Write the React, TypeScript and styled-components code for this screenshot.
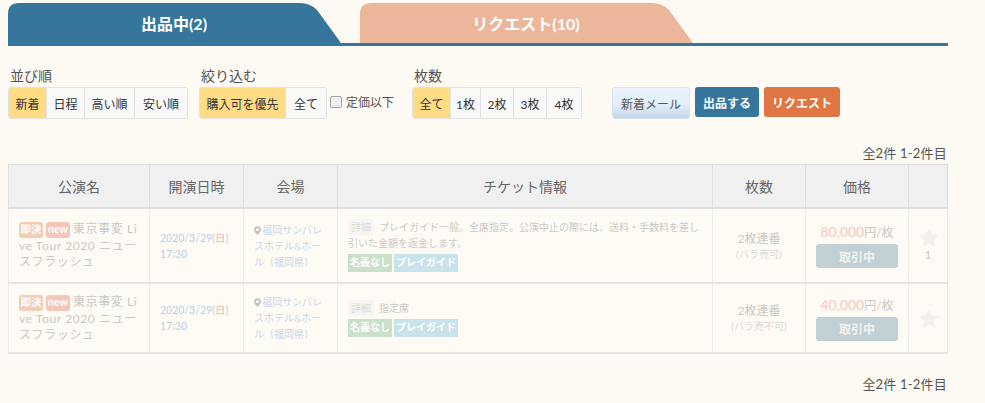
import { createGlobalStyle, styled } from "styled-components";

const GlobalStyle = createGlobalStyle`
  html, body {
    margin: 0;
    padding: 0;
    background: #fdfaf3;
    color: #444;
    font-family: "Lato", "Noto Sans CJK JP", sans-serif;
    font-size: 12px;
  }
`;

const Page = styled.div`
  width: 940px;
  padding: 3px 0 0 8px;
`;

const TabBar = styled.div`
  display: flex;
  gap: 20px;
  height: 40px;
  border-bottom: 3px solid #36769c;
`;

const Tab = styled.div<{ $active?: boolean }>`
  width: 332px;
  height: 40px;
  display: flex;
  align-items: center;
  justify-content: center;
  box-sizing: border-box;
  color: #fff;
  font-size: 16px;
  font-weight: 700;
  background: ${(p) => (p.$active ? "#36769c" : "#ecb69b")};
  clip-path: path("M0 40 V11 Q0 0 11 0 H292 Q302 0 309 7 L333 40 Z");
`;

const Filters = styled.div`
  display: flex;
  align-items: flex-end;
  margin-top: 21px;
  height: 52px;
`;

const FilterBlock = styled.div<{ $width: number }>`
  width: ${(p) => p.$width}px;
  flex: none;
`;

const FilterLabel = styled.div`
  height: 20px;
  padding-left: 2px;
  font-size: 14px;
  line-height: 18px;
  color: #555;
`;

const GroupRow = styled.div`
  display: flex;
  align-items: center;
`;

const Group = styled.div`
  display: inline-flex;
  height: 32px;
  box-sizing: border-box;
  border: 1px solid #e2e2e2;
  border-radius: 3px;
  overflow: hidden;
  vertical-align: top;
`;

const Seg = styled.div<{ $width: number; $on?: boolean }>`
  width: ${(p) => p.$width}px;
  box-sizing: border-box;
  display: flex;
  align-items: center;
  justify-content: center;
  font-size: 12px;
  color: #333;
  background: ${(p) => (p.$on ? "#ffdb84" : "#f9f9f9")};
  & + & {
    border-left: 1px solid #e2e2e2;
  }
`;

const CheckLabel = styled.label`
  display: flex;
  align-items: center;
  gap: 4px;
  margin-left: 3px;
  margin-top: -3px;
  font-size: 12px;
  color: #555;
`;

const CheckBox = styled.span`
  width: 12px;
  height: 12px;
  box-sizing: border-box;
  border: 1px solid #a5a5a5;
  border-radius: 2px;
  background: #f0f0f0;
`;

const Actions = styled.div`
  display: flex;
  align-items: flex-start;
  gap: 5px;
  height: 32px;
`;

const MailButton = styled.div`
  width: 78px;
  height: 32px;
  box-sizing: border-box;
  display: flex;
  align-items: center;
  justify-content: center;
  border: 1px solid #d8e4ee;
  border-radius: 3px;
  font-size: 12px;
  color: #555;
  background: linear-gradient(#e8f4fe 0%, #e4f1fc 50%, #c4d7e8 100%);
`;

const ActionButton = styled.div<{ $color: string; $width: number }>`
  width: ${(p) => p.$width}px;
  height: 30px;
  display: flex;
  align-items: center;
  justify-content: center;
  border-radius: 3px;
  font-size: 12px;
  font-weight: 700;
  color: #fff;
  background: ${(p) => p.$color};
`;

const Count = styled.div<{ $top: number }>`
  margin-top: ${(p) => p.$top}px;
  height: 18px;
  line-height: 18px;
  text-align: right;
  padding-right: 1px;
  font-size: 13px;
  letter-spacing: 0.2px;
  color: #555;
`;

const Table = styled.table`
  width: 939px;
  margin-top: 2px;
  border-collapse: collapse;
  table-layout: fixed;
`;

const Th = styled.th<{ $width: number }>`
  width: ${(p) => p.$width}px;
  box-sizing: border-box;
  height: 43px;
  padding: 0;
  background: #f0f0f0;
  border: 1px solid #dedede;
  border-bottom-width: 2px;
  font-size: 14px;
  font-weight: 400;
  color: #666;
`;

const Row = styled.tr<{ $height: number }>`
  height: ${(p) => p.$height}px;
  border-bottom: 2px solid #e6e5e1;
`;

const Td = styled.td<{ $center?: boolean }>`
  padding: 1px 10px 0;
  border-left: 1px solid #eeedea;
  border-right: 1px solid #eeedea;
  background: #fefbf5;
  vertical-align: middle;
  text-align: ${(p) => (p.$center ? "center" : "left")};
`;

const Title = styled.div`
  font-size: 12px;
  line-height: 16px;
  letter-spacing: 0.6px;
  color: #c9c8c3;
  word-break: break-all;
`;

const Badge = styled.span<{ $color: string }>`
  display: inline-block;
  height: 16px;
  width: 24px;
  text-align: center;
  line-height: 14px;
  margin-right: 3px;
  border-radius: 3px;
  font-size: 10.5px;
  font-weight: 700;
  letter-spacing: 0;
  color: #fff;
  background: ${(p) => p.$color};
`;

const DateText = styled.div`
  font-size: 10.5px;
  line-height: 16px;
  color: #bccde9;
`;

const Sunday = styled.span`
  color: #f4b3ae;
`;

const Venue = styled.div`
  font-size: 10px;
  line-height: 16px;
  color: #c9d6ec;
  svg {
    vertical-align: -1px;
    margin-right: 1px;
  }
`;

const Info = styled.div`
  font-size: 10px;
  line-height: 16px;
  color: #cbcac5;
`;

const Detail = styled.span`
  display: inline-block;
  height: 16px;
  padding: 0 3px;
  margin-right: 5px;
  background: #f6f5f1;
  border-radius: 2px;
  color: #dedcd6;
`;

const Tags = styled.div`
  display: flex;
  gap: 2px;
  margin-top: 3px;
`;

const Tag = styled.span<{ $color: string }>`
  height: 18px;
  line-height: 17px;
  padding: 0 2px;
  font-size: 10px;
  font-weight: 700;
  color: #fff;
  background: ${(p) => p.$color};
`;

const Seats = styled.div`
  font-size: 12px;
  line-height: 16px;
  color: #c9c8c3;
`;

const Split = styled.div`
  font-size: 10px;
  line-height: 14px;
  color: #dbdad5;
`;

const PriceCell = styled.div`
  font-size: 12px;
  line-height: 18px;
  color: #cbcac5;
  strong {
    font-size: 14px;
    font-weight: 400;
    color: #f5c9bd;
  }
`;

const Status = styled.div`
  height: 24px;
  margin: 2px auto 0;
  width: 82px;
  display: flex;
  align-items: center;
  justify-content: center;
  border-radius: 3px;
  font-size: 12px;
  font-weight: 700;
  color: #f3f3ee;
  background: #c0d0d4;
`;

const Fav = styled.div`
  color: #cbcac5;
  font-size: 12px;
  line-height: 16px;
  svg {
    display: block;
    margin: 0 auto;
  }
`;

const sorts = [
  { label: "新着", w: 37, on: true },
  { label: "日程", w: 38 },
  { label: "高い順", w: 50 },
  { label: "安い順", w: 53 },
];
const narrow = [
  { label: "購入可を優先", w: 85, on: true },
  { label: "全て", w: 41 },
];
const counts = [
  { label: "全て", w: 37, on: true },
  { label: "1枚", w: 30 },
  { label: "2枚", w: 33 },
  { label: "3枚", w: 33 },
  { label: "4枚", w: 35 },
];

const columns = [
  { label: "公演名", w: 141 },
  { label: "開演日時", w: 94 },
  { label: "会場", w: 94 },
  { label: "チケット情報", w: 375 },
  { label: "枚数", w: 93 },
  { label: "価格", w: 103 },
  { label: "", w: 39 },
];

const listings = [
  {
    height: 75,
    note: "プレイガイド一般。全席指定。公演中止の際には、送料・手数料を差し引いた金額を返金します。",
    split: "(バラ売可)",
    price: "80,000",
    favs: "1",
  },
  {
    height: 70,
    note: "指定席",
    split: "(バラ売不可)",
    price: "40,000",
    favs: "",
  },
];

function Pin() {
  return (
    <svg width="7" height="9" viewBox="0 0 8 10">
      <path
        fill="#c4c4bf"
        fillRule="evenodd"
        d="M4 0a4 4 0 0 1 4 4c0 2.2-2.6 4.8-4 6C2.6 8.800 0 6.200 0 4a4 4 0 0 1 4-4zm0 2.300a1.700 1.700 0 1 0 0 3.400 1.700 1.700 0 0 0 0-3.400z"
      />
    </svg>
  );
}

function Star() {
  return (
    <svg width="20" height="19" viewBox="0 0 20 19">
      <path
        fill="#f2f1ec"
        d="M10 0l3 6.300 7 .9-5.100 4.800 1.300 6.900L10 15.500l-6.200 3.400 1.300-6.900L0 7.200l7-.9z"
      />
    </svg>
  );
}

function Segments({ items }: { items: { label: string; w: number; on?: boolean }[] }) {
  return (
    <Group>
      {items.map((item) => (
        <Seg key={item.label} $width={item.w} $on={item.on}>
          {item.label}
        </Seg>
      ))}
    </Group>
  );
}

export default function App() {
  return (
    <Page>
      <GlobalStyle />
      <TabBar>
        <Tab $active>出品中(2)</Tab>
        <Tab>リクエスト(10)</Tab>
      </TabBar>

      <Filters>
        <FilterBlock $width={191}>
          <FilterLabel>並び順</FilterLabel>
          <Segments items={sorts} />
        </FilterBlock>
        <FilterBlock $width={213}>
          <FilterLabel>絞り込む</FilterLabel>
          <GroupRow>
            <Segments items={narrow} />
            <CheckLabel>
              <CheckBox />
              定価以下
            </CheckLabel>
          </GroupRow>
        </FilterBlock>
        <FilterBlock $width={200}>
          <FilterLabel>枚数</FilterLabel>
          <Segments items={counts} />
        </FilterBlock>
        <Actions>
          <MailButton>新着メール</MailButton>
          <ActionButton $color="#36769c" $width={64}>
            出品する
          </ActionButton>
          <ActionButton $color="#e07643" $width={76}>
            リクエスト
          </ActionButton>
        </Actions>
      </Filters>

      <Count $top={25}>全2件 1-2件目</Count>

      <Table>
        <thead>
          <tr>
            {columns.map((col) => (
              <Th key={col.label} $width={col.w}>
                {col.label}
              </Th>
            ))}
          </tr>
        </thead>
        <tbody>
          {listings.map((item) => (
            <Row key={item.price} $height={item.height}>
              <Td>
                <Title>
                  <Badge $color="#f2cdb8">即決</Badge>
                  <Badge $color="#f3c8bb">new</Badge>
                  東京事変 Live Tour 2020 ニュースフラッシュ
                </Title>
              </Td>
              <Td>
                <DateText>
                  2020/3/29(<Sunday>日</Sunday>)
                  <br />
                  17:30
                </DateText>
              </Td>
              <Td>
                <Venue>
                  <Pin />
                  福岡サンパレスホテル&ホール（福岡県）
                </Venue>
              </Td>
              <Td>
                <Info>
                  <Detail>詳細</Detail>
                  {item.note}
                </Info>
                <Tags>
                  <Tag $color="#cbe0ca">名義なし</Tag>
                  <Tag $color="#c9e3eb">プレイガイド</Tag>
                </Tags>
              </Td>
              <Td $center>
                <Seats>2枚連番</Seats>
                <Split>{item.split}</Split>
              </Td>
              <Td $center>
                <PriceCell>
                  <strong>{item.price}</strong>円/枚
                </PriceCell>
                <Status>取引中</Status>
              </Td>
              <Td $center>
                <Fav>
                  <Star />
                  {item.favs}
                </Fav>
              </Td>
            </Row>
          ))}
        </tbody>
      </Table>

      <Count $top={21}>全2件 1-2件目</Count>
    </Page>
  );
}
